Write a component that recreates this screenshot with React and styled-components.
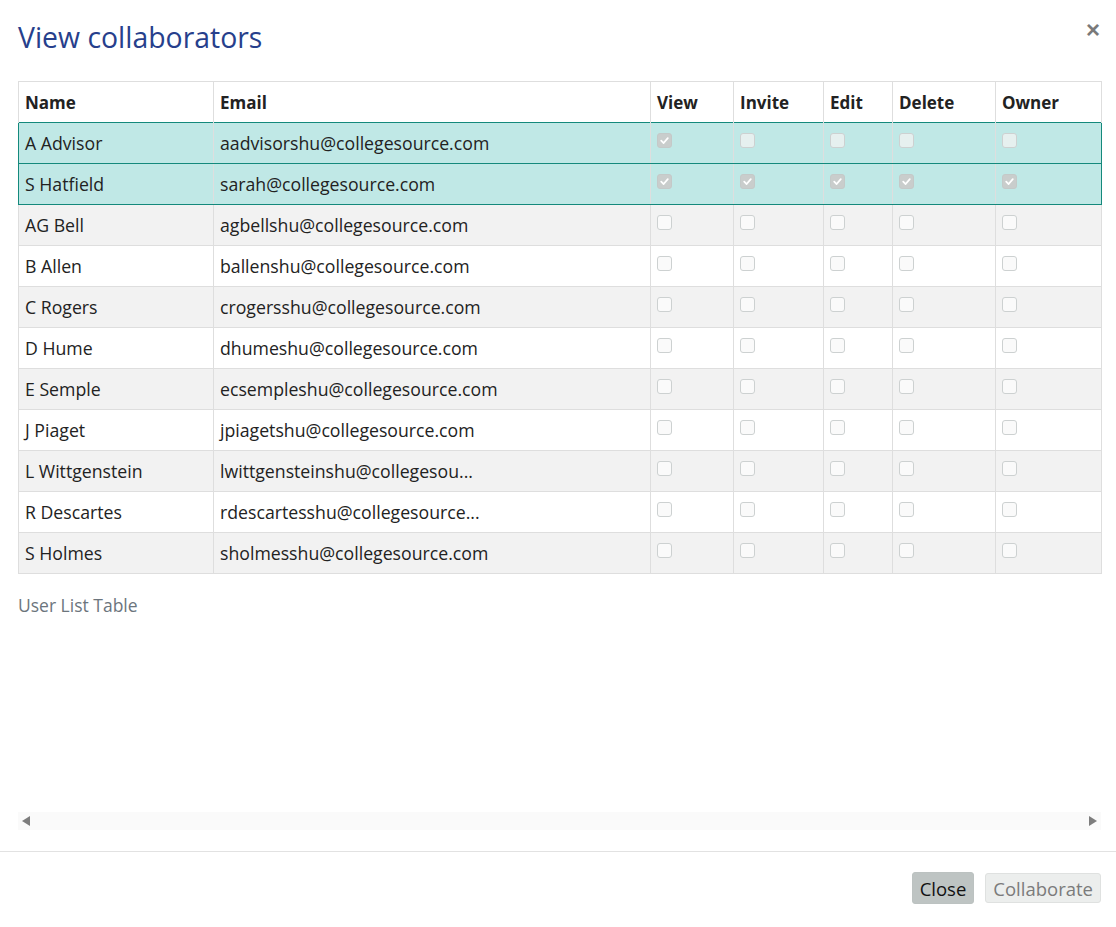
import React from 'react';
import styled, { createGlobalStyle } from 'styled-components';

const GlobalStyle = createGlobalStyle`
  html, body {
    margin: 0;
    padding: 0;
    background: #fff;
    font-family: 'Open Sans', 'Liberation Sans', sans-serif;
    color: #222;
  }
`;

const Modal = styled.div`
  width: 1116px;
  height: 927px;
  display: flex;
  flex-direction: column;
  box-sizing: border-box;
`;

const Header = styled.div`
  display: flex;
  justify-content: space-between;
  align-items: flex-start;
  padding: 18px 16px 0 18px;
  height: 81px;
  box-sizing: border-box;
`;

const Title = styled.h1`
  margin: 0;
  font-size: 28.4px;
  font-weight: 400;
  color: #273f8c;
`;

const CloseX = styled.button`
  border: 0;
  background: none;
  padding: 0;
  margin-top: 0;
  font-size: 24px;
  line-height: 24px;
  font-weight: 700;
  color: #7a7a7a;
  cursor: pointer;
  font-family: 'Liberation Sans', sans-serif;
`;

const Body = styled.div`
  padding: 0 15px 0 18px;
  height: 770px;
  display: flex;
  flex-direction: column;
`;

const Scroller = styled.div`
  flex: 1;
  display: flex;
  flex-direction: column;
`;

const Table = styled.table`
  width: 1083px;
  border-collapse: collapse;
  font-size: 17.7px;
  table-layout: fixed;
`;

const Th = styled.th`
  text-align: left;
  font-weight: 700;
  font-size: 17px;
  height: 41px;
  padding: 0 6px;
  border: 1px solid #dedede;
  border-bottom: none;
  width: ${(p) => p.$w};
  box-sizing: border-box;
`;

const Row = styled.tr`
  background: ${(p) => (p.$active ? '#c0e8e6' : p.$stripe ? '#f2f2f2' : '#fff')};
`;

const Td = styled.td`
  height: 41px;
  padding: 0 6px;
  border-left: 1px solid #dedede;
  border-right: 1px solid #dedede;
  border-top: 1px solid ${(p) => (p.$active ? '#14897c' : '#dedede')};
  border-bottom: 1px solid ${(p) => (p.$active ? '#14897c' : '#dedede')};
  white-space: nowrap;
  overflow: hidden;
  box-sizing: border-box;
  vertical-align: middle;
  &:first-child {
    border-left-color: ${(p) => (p.$active ? '#14897c' : '#dedede')};
  }
  &:last-child {
    border-right-color: ${(p) => (p.$active ? '#14897c' : '#dedede')};
  }
`;

const BoxCell = styled(Td)`
  vertical-align: top;
  padding-top: 10px;
  line-height: 0;
`;

const Box = styled.span`
  display: flex;
  align-items: center;
  justify-content: center;
  width: 15px;
  height: 15px;
  box-sizing: border-box;
  border-radius: 3px;
  border: 1px solid ${(p) => (p.$checked ? '#c4c9c8' : '#cdd1d1')};
  background: ${(p) => (p.$checked ? '#c9cdcc' : p.$active ? '#e6f0ef' : '#fafafa')};
`;

const Caption = styled.div`
  margin-top: 19px;
  font-size: 17.5px;
  color: #6c757d;
`;

const ScrollBar = styled.div`
  margin-top: auto;
  margin-bottom: 21px;
  height: 18px;
  width: 1083px;
  background: #fafafa;
  display: flex;
  align-items: center;
  justify-content: space-between;
  padding: 0 4px;
  box-sizing: border-box;
`;

const Arrow = styled.span`
  width: 0;
  height: 0;
  border-top: 5px solid transparent;
  border-bottom: 5px solid transparent;
  ${(p) => (p.$dir === 'left' ? 'border-right: 8px solid #7d7d7d;' : 'border-left: 8px solid #7d7d7d;')}
`;

const Footer = styled.div`
  border-top: 1px solid #e2e2e2;
  display: flex;
  justify-content: flex-end;
  align-items: center;
  gap: 11px;
  padding: 20px 15px 0 0;
`;

const Button = styled.button`
  font-family: 'Open Sans', 'Liberation Sans', sans-serif;
  font-size: 18.5px;
  height: ${(p) => (p.$primary ? '32px' : '30px')};
  padding: 0 7px;
  border-radius: 3px;
  border: 1px solid ${(p) => (p.$primary ? '#bcc2c1' : '#dfe1e0')};
  background: ${(p) => (p.$primary ? '#bec4c3' : '#eceeed')};
  color: ${(p) => (p.$primary ? '#111' : '#7b7b7b')};
`;

const cols = [
  ['Name', '195px'],
  ['Email', '437px'],
  ['View', '83px'],
  ['Invite', '90px'],
  ['Edit', '69px'],
  ['Delete', '103px'],
  ['Owner', '106px'],
];

const users = [
  ['A Advisor', 'aadvisorshu@collegesource.com', [1, 0, 0, 0, 0], true],
  ['S Hatfield', 'sarah@collegesource.com', [1, 1, 1, 1, 1], true],
  ['AG Bell', 'agbellshu@collegesource.com', [0, 0, 0, 0, 0]],
  ['B Allen', 'ballenshu@collegesource.com', [0, 0, 0, 0, 0]],
  ['C Rogers', 'crogersshu@collegesource.com', [0, 0, 0, 0, 0]],
  ['D Hume', 'dhumeshu@collegesource.com', [0, 0, 0, 0, 0]],
  ['E Semple', 'ecsempleshu@collegesource.com', [0, 0, 0, 0, 0]],
  ['J Piaget', 'jpiagetshu@collegesource.com', [0, 0, 0, 0, 0]],
  ['L Wittgenstein', 'lwittgensteinshu@collegesou...', [0, 0, 0, 0, 0]],
  ['R Descartes', 'rdescartesshu@collegesource...', [0, 0, 0, 0, 0]],
  ['S Holmes', 'sholmesshu@collegesource.com', [0, 0, 0, 0, 0]],
];

function Check({ checked, active }) {
  return (
    <Box $checked={checked} $active={active}>
      {checked && (
        <svg width="11" height="11" viewBox="0 0 10 10">
          <path d="M2 5.2 L4.2 7.3 L8 2.8" fill="none" stroke="#fff" strokeWidth="1.6" strokeLinecap="round" strokeLinejoin="round" />
        </svg>
      )}
    </Box>
  );
}

export default function App() {
  return (
    <>
      <GlobalStyle />
      <Modal>
        <Header>
          <Title>View collaborators</Title>
          <CloseX aria-label="Close">×</CloseX>
        </Header>
        <Body>
          <Scroller>
            <Table>
              <thead>
                <tr>
                  {cols.map(([label, w]) => (
                    <Th key={label} $w={w}>{label}</Th>
                  ))}
                </tr>
              </thead>
              <tbody>
                {users.map(([name, email, perms, active], i) => (
                  <Row key={name} $active={active} $stripe={i % 2 === 0}>
                    <Td $active={active}>{name}</Td>
                    <Td $active={active}>{email}</Td>
                    {perms.map((p, j) => (
                      <BoxCell key={j} $active={active}>
                        <Check checked={!!p} active={active} />
                      </BoxCell>
                    ))}
                  </Row>
                ))}
              </tbody>
            </Table>
            <Caption>User List Table</Caption>
          </Scroller>
          <ScrollBar>
            <Arrow $dir="left" />
            <Arrow $dir="right" />
          </ScrollBar>
        </Body>
        <Footer>
          <Button $primary>Close</Button>
          <Button>Collaborate</Button>
        </Footer>
      </Modal>
    </>
  );
}
